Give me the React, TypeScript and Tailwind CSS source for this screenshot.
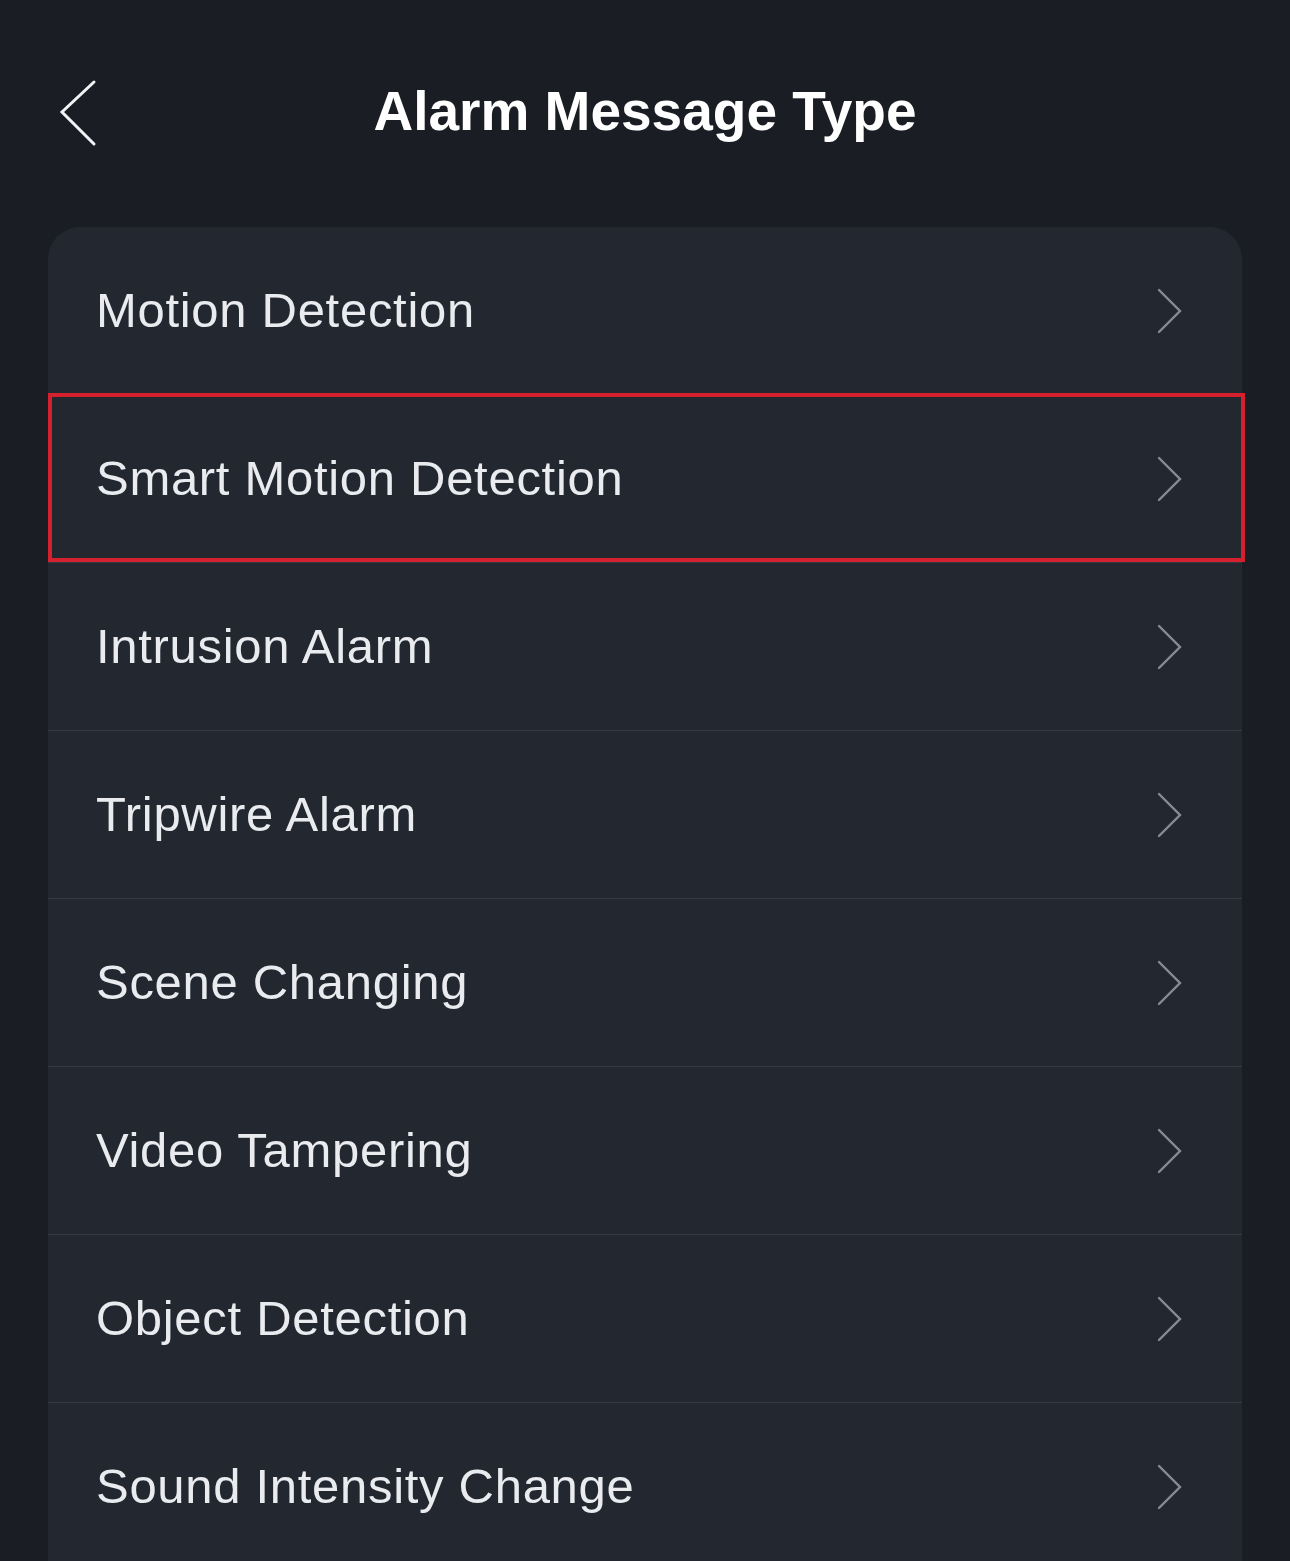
import React from 'react';

const items = [
  'Motion Detection',
  'Smart Motion Detection',
  'Intrusion Alarm',
  'Tripwire Alarm',
  'Scene Changing',
  'Video Tampering',
  'Object Detection',
  'Sound Intensity Change',
];

function Chevron() {
  return (
    <svg width="28" height="48" viewBox="0 0 28 48" fill="none" className="shrink-0">
      <path d="M3 3 L24 24 L3 45" stroke="#878b93" strokeWidth="2.4" strokeLinecap="round" strokeLinejoin="miter" />
    </svg>
  );
}

export default function App() {
  return (
    <div className="h-[1561px] overflow-hidden bg-[#1a1d23] text-[#e9ebef]" style={{ fontFamily: '"Liberation Sans", Arial, sans-serif' }}>
      {/* Header */}
      <header className="relative h-[227px] flex items-start justify-center">
        <button className="absolute left-[58px] top-[78px] w-[42px] h-[70px] flex items-center justify-center">
          <svg width="42" height="70" viewBox="0 0 42 70" fill="none">
            <path d="M36 4 L4 34 L36 66" stroke="#f2f3f5" strokeWidth="3" strokeLinecap="round" strokeLinejoin="miter" />
          </svg>
        </button>
        <h1 className="mt-[78px] text-[55px] leading-[66px] font-bold text-white">Alarm Message Type</h1>
      </header>

      {/* List */}
      <div className="mx-[48px] rounded-t-[32px] bg-[#222730] pb-[20px]">
        {items.map((label, i) => (
          <div key={label} className="relative">
            {i > 0 && <div className="h-px bg-[#333842]" />}
            <div className="flex items-center justify-between pl-[48px] pr-[58px] h-[167px]">
              <span className="text-[49px] tracking-[0.7px]">{label}</span>
              <Chevron />
            </div>
            {i === 1 && (
              <div className="absolute left-0 right-[-3px] top-[-1px] bottom-0 border-[4px] border-[#d4212d]" />
            )}
          </div>
        ))}
      </div>
    </div>
  );
}
